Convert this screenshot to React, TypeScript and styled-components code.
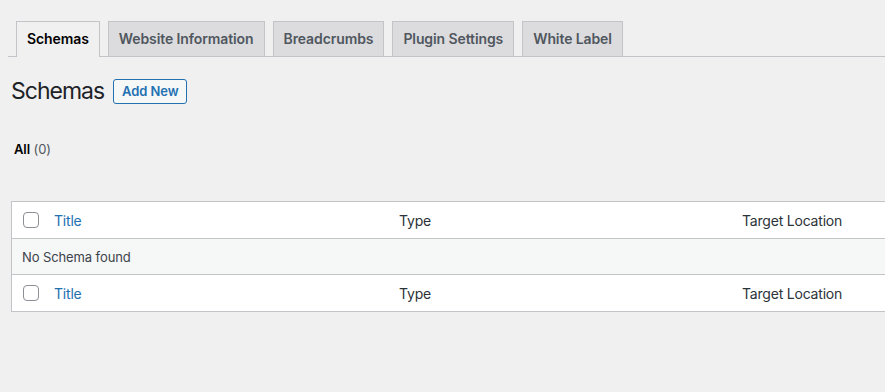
import styled, { createGlobalStyle } from 'styled-components';

const GlobalStyle = createGlobalStyle`
  html, body {
    margin: 0;
    padding: 0;
    background: #f0f0f1;
    overflow: hidden;
  }
  body {
    font-family: Inter, "Noto Sans", "Liberation Sans", sans-serif;
    color: #3c434a;
    font-size: 13px;
  }
`;

const Wrap = styled.div`
  padding: 21px 0 0 11px;
  width: 1100px;
`;

const TabBar = styled.nav`
  display: flex;
  margin-left: -3px;
  padding-left: 8px;
  border-bottom: 1px solid #c3c4c7;
  gap: 8px;
`;

const Tab = styled.a<{ $active?: boolean }>`
  display: block;
  padding: 5px 10px;
  line-height: 24px;
  font-size: 14px;
  font-weight: 600;
  border: 1px solid #c3c4c7;
  border-bottom: none;
  margin-bottom: ${(p) => (p.$active ? '-1px' : '0')};
  padding-bottom: ${(p) => (p.$active ? '6px' : '5px')};
  background: ${(p) => (p.$active ? '#f0f0f1' : '#dcdcde')};
  color: ${(p) => (p.$active ? '#000' : '#50575e')};
  letter-spacing: -0.1px;
  cursor: pointer;
`;

const HeadingRow = styled.div`
  display: flex;
  align-items: center;
  gap: 9px;
  margin-top: 19px;
  height: 30px;
`;

const Heading = styled.h1`
  margin: 0;
  font-size: 23px;
  font-weight: 400;
  color: #1d2327;
  letter-spacing: -1px;
`;

const AddButton = styled.button`
  height: 25px;
  padding: 0 8px;
  border: 1px solid #2271b1;
  border-radius: 3px;
  background: #f6f7f7;
  color: #2271b1;
  font-family: inherit;
  font-size: 13px;
  font-weight: 600;
  letter-spacing: -0.1px;
  cursor: pointer;
`;

const Filters = styled.div`
  margin: 33px 0 0 3px;
  line-height: 20px;
  font-size: 13px;
  color: #50575e;
  letter-spacing: -0.1px;

  > strong {
    color: #000;
    font-weight: 600;
  }
`;

const Table = styled.div`
  margin-top: 42px;
  border: 1px solid #c3c4c7;
  background: #fff;
  box-shadow: 0 1px 1px rgba(0, 0, 0, 0.04);
`;

const Row = styled.div<{ $empty?: boolean; $last?: boolean }>`
  display: grid;
  grid-template-columns: 32px 345px 343px 1fr;
  align-items: center;
  height: ${(p) => (p.$empty ? '35px' : '36px')};
  background: ${(p) => (p.$empty ? '#f6f7f7' : '#fff')};
  border-bottom: ${(p) => (p.$last ? 'none' : '1px solid #c3c4c7')};
`;

const CheckCell = styled.div`
  padding-left: 11px;
  display: flex;
  align-items: center;
`;

const Checkbox = styled.span`
  display: block;
  width: 14px;
  height: 14px;
  border: 1px solid #8c8f94;
  border-radius: 4px;
  background: #fff;
`;

const Cell = styled.div<{ $link?: boolean }>`
  padding-left: 10px;
  font-size: 14px;
  color: ${(p) => (p.$link ? '#2271b1' : '#2c3338')};
  letter-spacing: -0.2px;
`;

const EmptyCell = styled.div`
  grid-column: 1 / -1;
  padding-left: 10px;
  font-size: 13px;
  color: #3c434a;
  letter-spacing: -0.1px;
`;

const tabs = ['Schemas', 'Website Information', 'Breadcrumbs', 'Plugin Settings', 'White Label'];

const ColumnRow = ({ last }: { last?: boolean }) => (
  <Row $last={last}>
    <CheckCell>
      <Checkbox />
    </CheckCell>
    <Cell $link>Title</Cell>
    <Cell>Type</Cell>
    <Cell>Target Location</Cell>
  </Row>
);

const App = () => (
  <>
    <GlobalStyle />
    <Wrap>
      <TabBar>
        {tabs.map((t, i) => (
          <Tab key={t} $active={i === 0}>
            {t}
          </Tab>
        ))}
      </TabBar>
      <HeadingRow>
        <Heading>Schemas</Heading>
        <AddButton>Add New</AddButton>
      </HeadingRow>
      <Filters>
        <strong>All</strong> (0)
      </Filters>
      <Table>
        <ColumnRow />
        <Row $empty>
          <EmptyCell>No Schema found</EmptyCell>
        </Row>
        <ColumnRow last />
      </Table>
    </Wrap>
  </>
);

export default App;
